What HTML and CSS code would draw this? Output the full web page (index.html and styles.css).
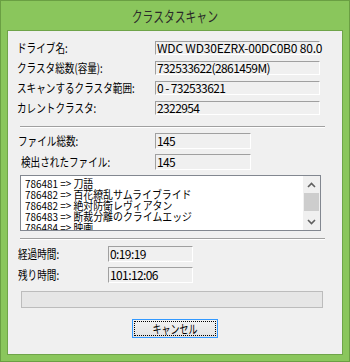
FILE: index.html
```html
<!DOCTYPE html>
<html lang="ja">
<head>
<meta charset="utf-8">
<title>クラスタスキャン</title>
<link rel="stylesheet" href="styles.css">
</head>
<body>
<div class="window">
  <div class="titlebar"><span class="title">クラスタスキャン</span></div>
  <div class="client">
    <div class="group g1">
      <div class="row"><span class="label"><span class="nar">ドライブ名:</span></span><span class="field drive">WDC WD30EZRX-00DC0B0 80.0</span></div>
      <div class="row"><span class="label"><span class="nar">クラスタ総数(容量):</span></span><span class="field">732533622(2861459M)</span></div>
      <div class="row"><span class="label"><span class="nar">スキャンするクラスタ範囲:</span></span><span class="field">0 - 732533621</span></div>
      <div class="row"><span class="label"><span class="nar">カレントクラスタ:</span></span><span class="field">2322954</span></div>
    </div>
    <div class="sep sep1"></div>
    <div class="group g2">
      <div class="row"><span class="label"><span class="nar">ファイル総数:</span></span><span class="field">145</span></div>
      <div class="row"><span class="label indent"><span class="nar">検出されたファイル:</span></span><span class="field">145</span></div>
    </div>
    <div class="list">
      <div class="list-items">
        <div class="item"><span class="nar2">786481 =&gt; 刀語</span></div>
        <div class="item"><span class="nar2">786482 =&gt; 百花繚乱サムライブライド</span></div>
        <div class="item"><span class="nar2">786482 =&gt; 絶対防衛レヴィアタン</span></div>
        <div class="item"><span class="nar2">786483 =&gt; 断裁分離のクライムエッジ</span></div>
        <div class="item"><span class="nar2">786484 =&gt; 映画</span></div>
      </div>
      <div class="scrollbar">
        <div class="arrow"><svg width="9" height="6" viewBox="0 0 9 6"><polyline points="1,5 4.5,1.5 8,5" fill="none" stroke="#606060" stroke-width="1.6"/></svg></div>
        <div class="thumb"></div>
        <div class="track"></div>
        <div class="arrow"><svg width="9" height="6" viewBox="0 0 9 6"><polyline points="1,1 4.5,4.5 8,1" fill="none" stroke="#606060" stroke-width="1.6"/></svg></div>
      </div>
    </div>
    <div class="sep sep2"></div>
    <div class="group g3">
      <div class="row"><span class="label"><span class="nar">経過時間:</span></span><span class="field">0:19:19</span></div>
      <div class="row"><span class="label"><span class="nar">残り時間:</span></span><span class="field">101:12:06</span></div>
    </div>
    <div class="progress"></div>
    <div class="btn"><div class="focus"><span class="nar3">キャンセル</span></div></div>
  </div>
</div>
</body>
</html>
```

FILE: styles.css
```css
* { box-sizing: border-box; }
html, body { margin: 0; padding: 0; }
body {
  width: 350px;
  height: 362px;
  font-family: "Noto Sans CJK JP", sans-serif;
  font-size: 12px;
  color: #000;
  background: #8ac65c;
  overflow: hidden;
}
.window {
  width: 350px;
  height: 362px;
  border: 1px solid #6a9f43;
  background: #8ac65c;
  display: flex;
  flex-direction: column;
  padding: 0 6px 6px;
}
.titlebar {
  height: 29px;
  flex: none;
  display: flex;
  align-items: center;
  justify-content: center;
}
.title {
  display: inline-block;
  font-size: 15px;
  line-height: 16px;
  color: #2a2a2a;
  transform: scaleX(0.72);
  white-space: nowrap;
}
.client {
  flex: 1;
  border: 1px solid #6fa449;
  background: #f0f0f0;
  display: flex;
  flex-direction: column;
  align-items: flex-start;
}
.group { display: flex; flex-direction: column; }
.row { display: flex; align-items: center; }
.label {
  flex: none;
  white-space: nowrap;
  line-height: 12px;
}
.nar, .nar2, .nar3 {
  display: inline-block;
  white-space: nowrap;
  transform-origin: 0 50%;
}
.nar { transform: scaleX(0.8); }
.nar2 { transform: scaleX(0.9); }
.nar3 { transform: scaleX(0.75); transform-origin: 50% 50%; }
.field {
  flex: none;
  border: 1px solid;
  border-color: #a0a0a0 #fff #fff #a0a0a0;
  line-height: 12px;
  padding-left: 1px;
  white-space: nowrap;
  letter-spacing: -0.6px;
  display: flex;
  align-items: center;
}
.field.drive { letter-spacing: -0.2px; }
.g1 { margin-top: 10px; gap: 6px; padding-left: 9px; }
.g1 .label { width: 138px; }
.g1 .field { width: 165px; height: 14px; }
.sep {
  height: 2px;
  width: 305px;
  margin-left: 12px;
  border-top: 1px solid #a0a0a0;
  border-bottom: 1px solid #fff;
}
.sep1 { margin-top: 11px; }
.g2 { margin-top: 5px; gap: 5px; padding-left: 10px; }
.g2 .label { width: 137px; }
.g2 .label.indent { padding-left: 3px; }
.g2 .field { width: 96px; height: 16px; }
.list {
  margin-top: 5px;
  margin-left: 12px;
  width: 301px;
  height: 56px;
  border: 1px solid #828790;
  background: #fff;
  display: flex;
}
.list-items {
  flex: 1;
  overflow: hidden;
  padding: 2px 0 0 4px;
  font-size: 11px;
}
.item { line-height: 11px; height: 11px; white-space: nowrap; }
.scrollbar {
  width: 17px;
  flex: none;
  background: #f0f0f0;
  display: flex;
  flex-direction: column;
}
.arrow {
  height: 17px;
  flex: none;
  display: flex;
  align-items: center;
  justify-content: center;
}
.thumb { height: 18px; flex: none; background: #cdcdcd; margin: 0 1px; }
.track { flex: 1; }
.sep2 { margin-top: 7px; }
.g3 { margin-top: 6px; gap: 5px; padding-left: 10px; }
.g3 .label { width: 90px; }
.g3 .field { width: 85px; height: 16px; }
.progress {
  margin-top: 8px;
  margin-left: 13px;
  width: 302px;
  height: 17px;
  background: #e6e6e6;
  border: 1px solid #bcbcbc;
}
.btn {
  margin-top: 11px;
  margin-left: 124px;
  width: 86px;
  height: 19px;
  border: 1px solid #3399ff;
  background: linear-gradient(#f3f3f3, #e2e2e2);
  padding: 1px;
}
.focus {
  height: 100%;
  border: 1px dotted #000;
  display: flex;
  align-items: center;
  justify-content: center;
  line-height: 12px;
}
```
